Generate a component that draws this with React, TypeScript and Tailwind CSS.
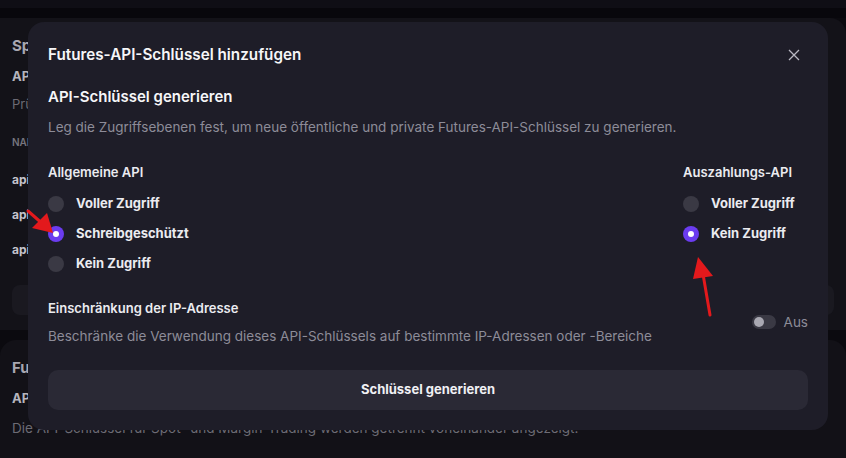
import React from "react";

type RadioProps = {
  label: string;
  checked?: boolean;
};

const Radio: React.FC<RadioProps> = ({ label, checked }) => {
  return (
    <div className="flex h-[30px] items-center gap-3">
      {checked ? (
        <span className="flex h-4 w-4 items-center justify-center rounded-full bg-[#6b3cf0]">
          <span className="h-[6px] w-[6px] rounded-full bg-white" />
        </span>
      ) : (
        <span className="h-4 w-4 rounded-full bg-[#3a3944]" />
      )}
      <span className="text-[13px] font-bold text-[#ebebf0]">{label}</span>
    </div>
  );
};

const BackgroundPage: React.FC = () => {
  return (
    <div className="flex h-[458px] w-[846px] flex-col overflow-hidden bg-[#0b0a0f]">
      <div className="h-2 bg-[#0f0e15]" />
      <div className="h-[10px] bg-[#08070c]" />
      <div className="h-[312px] rounded-tr-2xl bg-[#131218] px-3 pt-4">
        <div className="text-[15px] font-bold leading-6 text-[#a8a7b0]">Spot-API-Schlüssel</div>
        <div className="mt-2 text-[13px] font-bold leading-5 text-[#b6b5bd]">API-Schlüssel</div>
        <div className="mt-2 text-[13px] leading-5 text-[#6c6b74]">Prüfe deine API-Schlüssel</div>
        <div className="mt-5 text-[10px] font-semibold leading-4 text-[#76757e]">NAME</div>
        <div className="mt-[22px] text-[12px] font-bold leading-4 text-[#c4c3cb]">api-key-1</div>
        <div className="mt-[19px] text-[12px] font-bold leading-4 text-[#c4c3cb]">api-key-2</div>
        <div className="mt-[19px] text-[12px] font-bold leading-4 text-[#c4c3cb]">api-key-3</div>
        <div className="mt-[27px] h-[30px] rounded-lg bg-[#1a1920]" />
      </div>
      <div className="h-[10px]" />
      <div className="flex-1 rounded-t-2xl bg-[#121117] px-3 pt-4">
        <div className="text-[15px] font-bold leading-6 text-[#a8a7b0]">Futures-API-Schlüssel</div>
        <div className="mt-2 text-[13px] font-bold leading-5 text-[#b6b5bd]">API-Schlüssel</div>
        <div className="mt-[10px] text-[13.5px] leading-5 text-[#6c6b74]">
          Die API-Schlüssel für Spot- und Margin-Trading werden getrennt voneinander angezeigt.
        </div>
      </div>
    </div>
  );
};

const Modal: React.FC = () => {
  return (
    <div className="absolute left-[28px] top-[22px] w-[800px] rounded-2xl bg-[#1e1d28] px-5 pb-5 pt-[21px]">
      <div className="flex h-6 items-center justify-between">
        <h2 className="text-[15.25px] font-semibold leading-6 text-[#f6f6f8]">Futures-API-Schlüssel hinzufügen</h2>
        <svg width="12" height="12" viewBox="0 0 12 12" className="mr-[8px]">
          <path d="M1 1L11 11M11 1L1 11" stroke="#b9b8c2" strokeWidth="1.3" />
        </svg>
      </div>

      <h3 className="mt-[18px] text-[15px] font-semibold leading-6 text-[#f6f6f8]">API-Schlüssel generieren</h3>
      <p className="mt-2 text-[13.5px] leading-5 text-[#8d8c98]">
        Leg die Zugriffsebenen fest, um neue öffentliche und private Futures-API-Schlüssel zu generieren.
      </p>

      <div className="mt-[25px] flex justify-between">
        <div>
          <div className="text-[13px] font-semibold leading-5 text-[#ebebf0]">Allgemeine API</div>
          <div className="mt-[7px]">
            <Radio label="Voller Zugriff" />
            <Radio label="Schreibgeschützt" checked />
            <Radio label="Kein Zugriff" />
          </div>
        </div>
        <div className="w-[125px]">
          <div className="text-[13px] font-semibold leading-5 text-[#ebebf0]">Auszahlungs-API</div>
          <div className="mt-[7px]">
            <Radio label="Voller Zugriff" />
            <Radio label="Kein Zugriff" checked />
          </div>
        </div>
      </div>

      <div className="mt-[19px] flex items-center justify-between">
        <div>
          <div className="text-[13px] font-semibold leading-5 text-[#ebebf0]">Einschränkung der IP-Adresse</div>
          <div className="mt-2 text-[13.5px] leading-5 text-[#8d8c98]">
            Beschränke die Verwendung dieses API-Schlüssels auf bestimmte IP-Adressen oder -Bereiche
          </div>
        </div>
        <div className="flex items-center gap-2">
          <div className="flex h-[14px] w-6 items-center rounded-full bg-[#3a3944] px-[2px]">
            <span className="h-[10px] w-[10px] rounded-full bg-[#a9a8b2]" />
          </div>
          <span className="text-[13.5px] leading-5 text-[#8d8c98]">Aus</span>
        </div>
      </div>

      <button className="mt-6 flex h-10 w-full items-center justify-center rounded-[10px] bg-[#2a2935] text-[13px] font-bold text-[#f0f0f4]">
        Schlüssel generieren
      </button>
    </div>
  );
};

const Arrows: React.FC = () => {
  return (
    <svg className="pointer-events-none absolute left-0 top-0" width="846" height="458" viewBox="0 0 846 458">
      <line x1="28" y1="211" x2="44" y2="225" stroke="#e3191c" strokeWidth="3" strokeLinecap="round" />
      <polygon points="53,233 32,228 47,213" fill="#e3191c" />
      <line x1="710" y1="315" x2="703" y2="274" stroke="#e3191c" strokeWidth="3" strokeLinecap="round" />
      <polygon points="698,257 693,279 713,276" fill="#e3191c" />
    </svg>
  );
};

export default function App() {
  return (
    <div className="relative h-[458px] w-[846px] overflow-hidden font-['Inter',sans-serif]">
      <BackgroundPage />
      <Modal />
      <Arrows />
    </div>
  );
}
